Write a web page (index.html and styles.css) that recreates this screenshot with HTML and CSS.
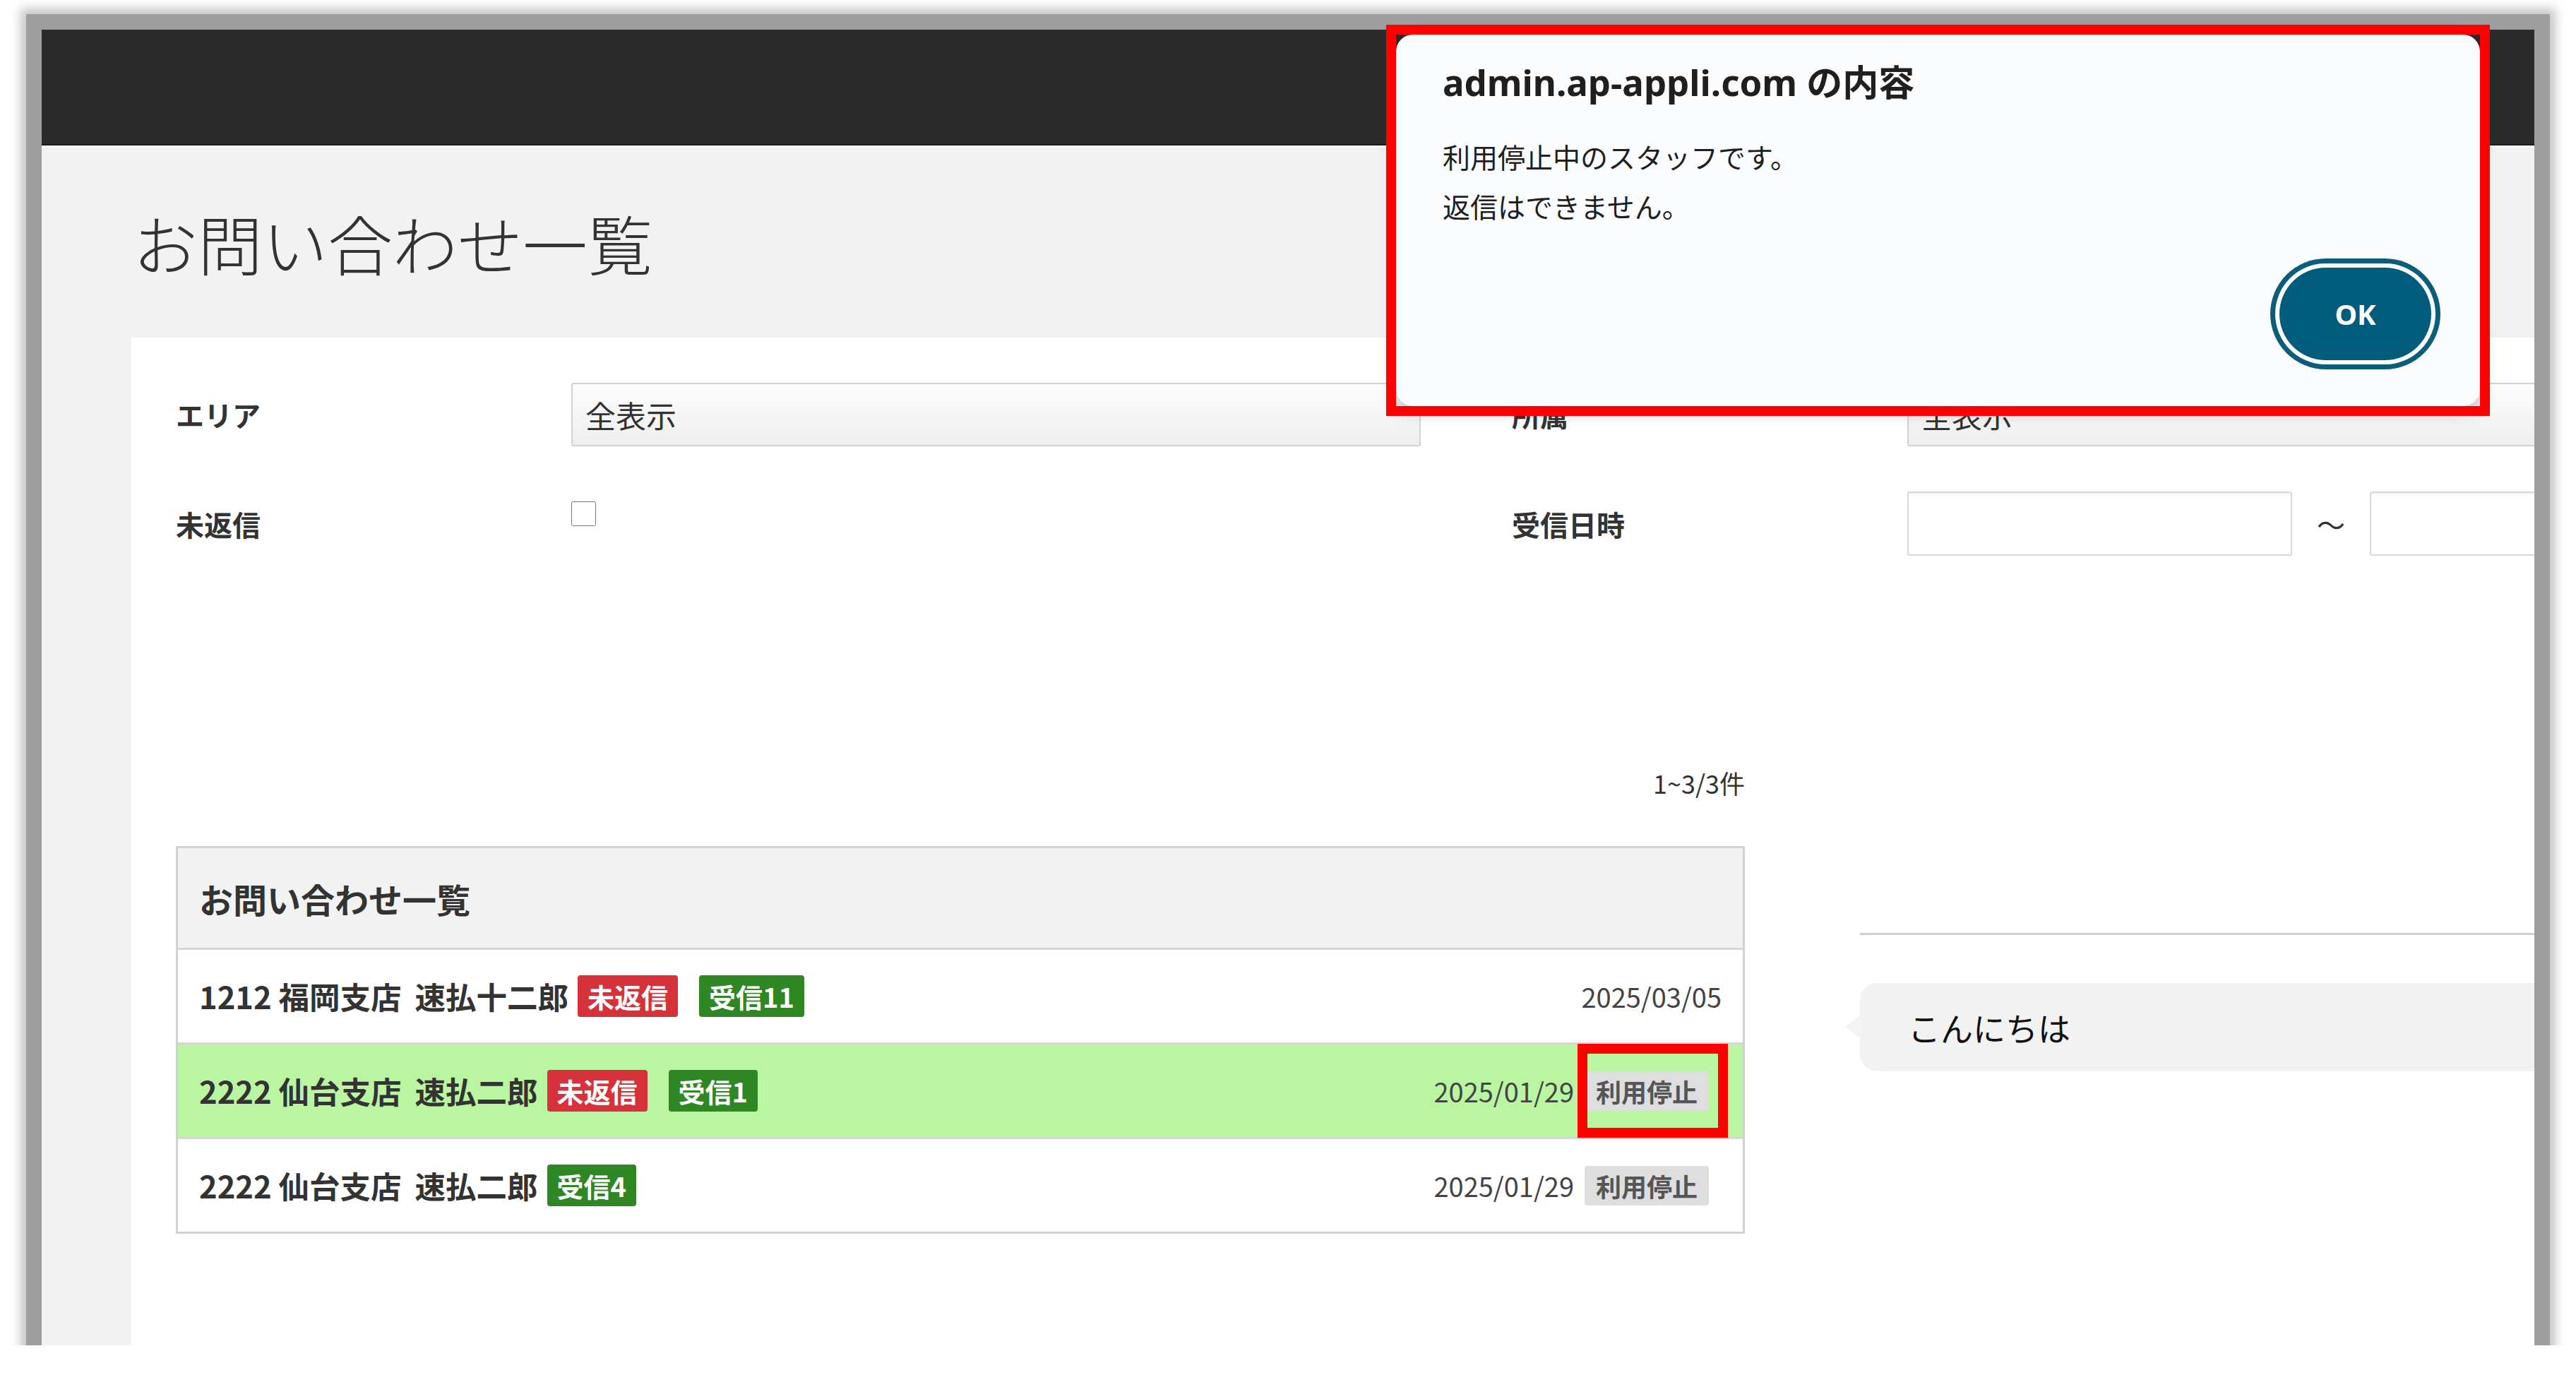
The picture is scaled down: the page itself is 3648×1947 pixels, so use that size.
FILE: index.html
```html
<!DOCTYPE html>
<html lang="ja">
<head>
<meta charset="UTF-8">
<meta name="viewport" content="width=device-width, initial-scale=1.0">
<title>お問い合わせ一覧</title>
<link rel="stylesheet" href="styles.css">
</head>
<body>

<div class="frame">
    <div class="screen">
        <header class="topbar"></header>

        <main class="page">
            <h1 class="page-title">お問い合わせ一覧</h1>

            <section class="card">
                <div class="filters">
                    <div class="field">
                        <label class="field-label">エリア</label>
                        <select class="select"><option>全表示</option></select>
                    </div>
                    <div class="field">
                        <label class="field-label">所属</label>
                        <select class="select"><option>全表示</option></select>
                    </div>
                    <div class="field">
                        <label class="field-label">未返信</label>
                        <div class="field-check"><input type="checkbox" class="check"></div>
                    </div>
                    <div class="field">
                        <label class="field-label">受信日時</label>
                        <div class="date-range">
                            <input type="text" class="date-input">
                            <span class="tilde">～</span>
                            <input type="text" class="date-input">
                        </div>
                    </div>
                </div>

                <div class="lower">
                    <div class="list-col">
                        <p class="count">1~3/3件</p>
                        <div class="inquiry-list">
                            <div class="list-head">お問い合わせ一覧</div>
                            <div class="list-row">
                                <span class="staff-no">1212 福岡支店</span><span class="staff-name">速払十二郎</span>
                                <span class="tag tag-red">未返信</span>
                                <span class="tag tag-green">受信11</span>
                                <span class="date">2025/03/05</span>
                            </div>
                            <div class="list-row is-active">
                                <span class="staff-no">2222 仙台支店</span><span class="staff-name">速払二郎</span>
                                <span class="tag tag-red">未返信</span>
                                <span class="tag tag-green">受信1</span>
                                <span class="date">2025/01/29</span>
                                <span class="status is-marked">利用停止</span>
                            </div>
                            <div class="list-row">
                                <span class="staff-no">2222 仙台支店</span><span class="staff-name">速払二郎</span>
                                <span class="tag tag-green">受信4</span>
                                <span class="date">2025/01/29</span>
                                <span class="status">利用停止</span>
                            </div>
                        </div>
                    </div>

                    <div class="chat-col">
                        <div class="chat-line"></div>
                        <div class="bubble">こんにちは</div>
                    </div>
                </div>
            </section>
        </main>
    </div>

    <div class="dialog">
        <div class="dialog-title">admin.ap-appli.com の内容</div>
        <div class="dialog-text">利用停止中のスタッフです。<br>返信はできません。</div>
        <div class="dialog-actions">
            <button class="ok-button">OK</button>
        </div>
    </div>
</div>

</body>
</html>
```

FILE: styles.css
```css
body {
    margin: 0;
    background-color: #ffffff;
    font-family: "Noto Sans CJK JP", "Noto Sans", sans-serif;
    color: #333333;
}

.frame {
    position: relative;
    width: 3530px;
    height: 1863px;
    margin: 42px 0 0 59px;
    box-shadow: 0 0 0 22px #9e9e9e, 0 0 14px 30px rgba(158, 158, 158, 0.6);
}

.screen {
    width: 100%;
    height: 100%;
    overflow: hidden;
    background-color: #f2f2f2;
}

.topbar {
    height: 162px;
    background-color: #2b2b2b;
    border-bottom: 2px solid #1b1b1b;
}

.page {
    border-top: 3px solid #fafafa;
    padding: 88px 0 0 127px;
}

.page-title {
    margin: 0 0 89px 2px;
    font-size: 92px;
    line-height: 92px;
    font-weight: 300;
    color: #333333;
}

.card {
    width: 3783px;
    min-height: 1500px;
    box-sizing: border-box;
    padding: 64px 63px;
    background-color: #ffffff;
}

/* filters */
.filters {
    display: grid;
    grid-template-columns: 1763px 1763px;
    column-gap: 129px;
    row-gap: 64px;
}

.field {
    display: grid;
    grid-template-columns: 560px 1203px;
    align-items: center;
}

.field-label {
    font-size: 40px;
    font-weight: bold;
    color: #333333;
}

.select {
    appearance: none;
    width: 1203px;
    height: 90px;
    box-sizing: border-box;
    padding: 0 18px;
    border: 2px solid #d2d2d2;
    border-radius: 3px;
    background: linear-gradient(#fdfdfd, #eeeeee);
    font-family: inherit;
    font-size: 43px;
    color: #333333;
}

.field-check {
    align-self: start;
}

.check {
    width: 35px;
    height: 35px;
    margin: 14px 0 0;
    accent-color: #555555;
}

.date-range {
    display: flex;
    align-items: center;
}

.date-input {
    width: 545px;
    height: 91px;
    box-sizing: border-box;
    border: 2px solid #d8d8d8;
    border-radius: 3px;
    box-shadow: inset 0 2px 2px rgba(0, 0, 0, 0.05);
    background-color: #ffffff;
}

.tilde {
    margin: 0 35px;
    font-size: 40px;
    color: #333333;
}

/* list + chat */
.lower {
    display: grid;
    grid-template-columns: 2222px 1fr;
    column-gap: 163px;
    margin-top: 294px;
}

.count {
    margin: 0 0 63px;
    text-align: right;
    font-size: 36px;
    line-height: 54px;
    color: #333333;
}

.inquiry-list {
    border: 3px solid #d2d2d2;
}

.list-head {
    display: flex;
    align-items: center;
    height: 141px;
    padding-left: 30px;
    background-color: #f2f2f2;
    font-size: 48px;
    font-weight: bold;
}

.list-row {
    display: flex;
    align-items: center;
    height: 131px;
    padding: 0 30px 0 30px;
    border-top: 3px solid #d6d6d6;
    background-color: #ffffff;
}

.list-row.is-active {
    background-color: #baf5a2;
}

.staff-no,
.staff-name {
    font-size: 43.5px;
    font-weight: bold;
    color: #333333;
}

.staff-name {
    margin-left: 19px;
}

.tag {
    margin-left: 13px;
    padding: 0 14px;
    height: 59px;
    line-height: 59px;
    border-radius: 4px;
    font-size: 38px;
    font-weight: bold;
    color: #ffffff;
}

.tag + .tag {
    margin-left: 30px;
}

.tag-red {
    background-color: #d7313a;
}

.tag-green {
    background-color: #2e8723;
}

.date {
    margin-left: auto;
    font-size: 38px;
    color: #444444;
}

.status {
    position: relative;
    margin: 0 18px 0 15px;
    padding: 0 16px;
    height: 56px;
    line-height: 56px;
    border-radius: 4px;
    background-color: #dedede;
    font-size: 36px;
    font-weight: bold;
    color: #555555;
}

.status.is-marked::after {
    content: "";
    position: absolute;
    left: -10px;
    right: -27px;
    top: -39px;
    bottom: -38px;
    border: 14px solid #ff0000;
}

.chat-line {
    margin-top: 240px;
    border-top: 3px solid #d0d0d0;
}

.bubble {
    position: relative;
    margin-top: 68px;
    height: 125px;
    line-height: 125px;
    padding-left: 68px;
    border-radius: 24px;
    background-color: #f2f2f2;
    font-size: 46px;
    color: #111111;
}

.bubble::before {
    content: "";
    position: absolute;
    left: -21px;
    top: 46px;
    border-top: 16px solid transparent;
    border-bottom: 16px solid transparent;
    border-right: 21px solid #f4f4f4;
}

/* alert dialog */
.dialog {
    position: absolute;
    left: 1918px;
    top: 7px;
    width: 1535px;
    height: 526px;
    box-sizing: border-box;
    padding: 37px 69px 65px 66px;
    display: flex;
    flex-direction: column;
    border-radius: 24px;
    background-color: #fbfcfe;
    box-shadow: 0 6px 24px rgba(0, 0, 0, 0.28);
    color: #1f1f1f;
}

.dialog::after {
    content: "";
    position: absolute;
    top: -14px;
    left: -14px;
    right: -14px;
    bottom: -14px;
    border: 14px solid #ff0000;
}

.dialog-title {
    font-family: "Noto Sans", "Noto Sans CJK JP", sans-serif;
    font-size: 51px;
    line-height: 60px;
    font-weight: bold;
}

.dialog-text {
    margin-top: 40px;
    font-size: 39px;
    line-height: 70px;
}

.dialog-actions {
    margin-top: auto;
    display: flex;
    justify-content: flex-end;
}

.ok-button {
    width: 215px;
    height: 131px;
    border: none;
    border-radius: 66px;
    background-color: #015b7b;
    box-shadow: 0 0 0 6px #fbfcfe, 0 0 0 13px #0c5d7b;
    color: #ffffff;
    font-family: "Noto Sans", sans-serif;
    font-size: 40px;
    font-weight: bold;
}
```
